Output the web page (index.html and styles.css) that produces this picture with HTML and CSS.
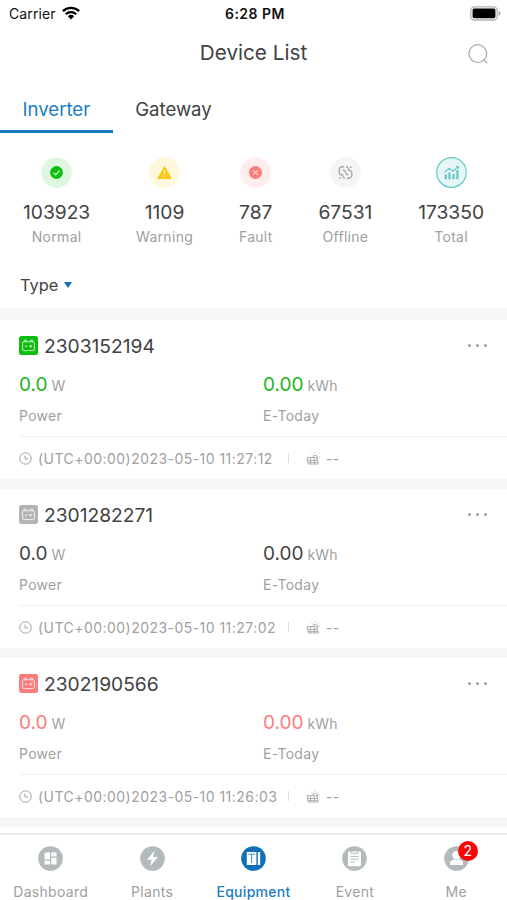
FILE: index.html
```
<!DOCTYPE html>
<html lang="en">

<head>
    <meta charset="UTF-8">
    <meta name="viewport" content="width=device-width, initial-scale=1.0">
    <title>Device List</title>
    <link rel="stylesheet" href="styles.css">
</head>

<body>

    <!-- Shared icons -->
    <svg class="icon-defs" width="0" height="0">
        <symbol id="icon-inverter" viewBox="0 0 19 19">
            <rect width="19" height="19" rx="2.5" fill="currentColor"/>
            <g fill="none" stroke="#fff" stroke-opacity="0.75" stroke-width="1">
                <rect x="3.6" y="5.8" width="11.8" height="8.8" rx="1.4"/>
                <path d="M5.2 5.6V4.2H7.4V5.6M11.4 5.6V4.2H13.6V5.6M5.8 10.2H8.6M10.2 10.2H13.2M11.7 8.8V11.6"/>
            </g>
        </symbol>
        <symbol id="icon-clock" viewBox="0 0 13 13">
            <g fill="none" stroke="currentColor" stroke-width="1">
                <circle cx="6.5" cy="6.5" r="5.7"/>
                <path d="M6 3.6V7H9.2"/>
            </g>
        </symbol>
        <symbol id="icon-solar" viewBox="0 0 14 13">
            <g fill="none" stroke="currentColor" stroke-width="0.8">
                <path d="M1 5.6H10.8L12.4 12H2.2ZM1.4 8.4H11.6M2 10.4H12M4.6 5.6V12M8 5.6L8.6 12"/>
                <path d="M6.4 5.2A2.7 2.7 0 0 1 11.6 5.4V7M9 0.4V1.6M5.5 1.8L6.3 2.7M12.5 1.8L11.7 2.7M12.6 5H13.8"/>
            </g>
        </symbol>
    </svg>

    <!-- Status Bar -->
    <div class="status-bar">
        <div class="carrier">
            <span>Carrier</span>
            <svg width="18" height="14" viewBox="0 0 18 14">
                <g fill="none" stroke="#000" stroke-width="2.3">
                    <path d="M0.9 5.1A11.6 11.6 0 0 1 17.1 5.1"/>
                    <path d="M3.7 8.2A7.6 7.6 0 0 1 14.3 8.2"/>
                </g>
                <path d="M5.9 10.3A4.5 4.5 0 0 1 12.1 10.3L9 13.6Z"/>
            </svg>
        </div>
        <span class="time">6:28 PM</span>
        <svg class="battery" width="31" height="15" viewBox="0 0 31 15">
            <rect x="0.8" y="0.8" width="26.4" height="13.2" rx="3.6" fill="#fff" stroke="#b5b5b5" stroke-width="1.3"/>
            <rect x="2.6" y="2.6" width="22.8" height="9.6" rx="1.8"/>
            <path d="M28.6 5Q30.6 5.6 30.6 7.4T28.6 9.8Z" fill="#aaa"/>
        </svg>
    </div>

    <!-- Header -->
    <div class="header">
        <h1>Device List</h1>
        <svg class="search" width="20" height="20" viewBox="0 0 20 20" fill="none" stroke="#a6a6a6" stroke-width="1.2">
            <circle cx="9.8" cy="9.6" r="8.9"/>
            <path d="M15.4 15.6L19.2 19.2"/>
        </svg>
    </div>

    <!-- Tabs -->
    <div class="tabs">
        <div class="tab active">Inverter</div>
        <div class="tab">Gateway</div>
    </div>

    <!-- Status Counters -->
    <div class="stats">
        <div class="stat">
            <svg width="31" height="31" viewBox="0 0 31 31">
                <circle cx="15.5" cy="15.5" r="15.3" fill="#dff7df"/>
                <circle cx="15.5" cy="15.5" r="6.4" fill="#0ebe0e"/>
                <path d="M12.4 15.6L14.7 17.8L18.7 13.5" fill="none" stroke="#c9f5c9" stroke-width="1.2"/>
            </svg>
            <span class="count">103923</span>
            <span class="name">Normal</span>
        </div>
        <div class="stat">
            <svg width="31" height="31" viewBox="0 0 31 31">
                <circle cx="15.5" cy="15.5" r="15.3" fill="#fff8dc"/>
                <path d="M15.5 9.8L22 21.3H9Z" fill="#fbc912" stroke="#fbc912" stroke-width="1.2" stroke-linejoin="round"/>
                <path d="M15.5 13V17.6M15.5 18.8V20.2" stroke="#fff3c4" stroke-width="1.4"/>
            </svg>
            <span class="count">1109</span>
            <span class="name">Warning</span>
        </div>
        <div class="stat">
            <svg width="31" height="31" viewBox="0 0 31 31">
                <circle cx="15.5" cy="15.5" r="15.3" fill="#ffecec"/>
                <circle cx="15.5" cy="15.5" r="6.5" fill="#fb7c7c"/>
                <path d="M13.1 13.1L17.9 17.9M17.9 13.1L13.1 17.9" stroke="#ffd5d5" stroke-width="1.1"/>
            </svg>
            <span class="count">787</span>
            <span class="name">Fault</span>
        </div>
        <div class="stat">
            <svg width="31" height="31" viewBox="0 0 31 31">
                <circle cx="15.5" cy="15.5" r="15.3" fill="#f5f5f5"/>
                <g fill="none" stroke="#a9a9a9" stroke-width="1.4">
                    <path d="M13.4 18H12.4A3.2 3.2 0 0 1 9.2 14.8V13A3.2 3.2 0 0 1 12.4 9.8H14.2M16.2 9.8A3 3 0 0 1 18.4 11.8"/>
                    <path d="M17.6 13H18.6A3.2 3.2 0 0 1 21.8 16.2V18A3.2 3.2 0 0 1 18.6 21.2H16.8M14.8 21.2A3 3 0 0 1 12.6 19.2"/>
                    <path d="M12.6 13.2H14.2L17 17.8H18.4M20.2 10.8L21.6 9.4M10.8 20.2L9.4 21.6"/>
                </g>
            </svg>
            <span class="count">67531</span>
            <span class="name">Offline</span>
        </div>
        <div class="stat">
            <svg width="31" height="31" viewBox="0 0 31 31">
                <circle cx="15.5" cy="15.5" r="14.8" fill="#e6f6f6" stroke="#62cbc9" stroke-width="1.2"/>
                <path d="M9.8 22.2V17.5M13.5 22.2V15.5M17.5 22.2V17M21.4 22.2V13" stroke="#62c6c6" stroke-width="2.2"/>
                <path d="M8.4 15.4L13.2 11.4L17 14.2L22 9.8M19.8 9.6H22.4V12" fill="none" stroke="#62c6c6" stroke-width="1.1"/>
            </svg>
            <span class="count">173350</span>
            <span class="name">Total</span>
        </div>
    </div>

    <!-- Type Filter -->
    <div class="type-filter">
        <span>Type</span>
        <span class="arrow"></span>
    </div>

    <!-- Devices -->
    <div class="device-list">
        <div class="device normal">
            <div class="device-title">
                <svg class="badge" width="19" height="19"><use href="#icon-inverter"/></svg>
                <span class="serial">2303152194</span>
                <span class="more"><i></i><i></i><i></i></span>
            </div>
            <div class="readings">
                <div class="reading">
                    <div><span class="value">0.0</span><span class="unit">W</span></div>
                    <div class="caption">Power</div>
                </div>
                <div class="reading">
                    <div><span class="value">0.00</span><span class="unit">kWh</span></div>
                    <div class="caption">E-Today</div>
                </div>
            </div>
            <div class="device-footer">
                <svg width="13" height="13"><use href="#icon-clock"/></svg>
                <span class="updated">(UTC+00:00)2023-05-10 11:27:12</span>
                <span class="divider"></span>
                <svg width="14" height="13"><use href="#icon-solar"/></svg>
                <span class="plant">--</span>
            </div>
        </div>

        <div class="device offline">
            <div class="device-title">
                <svg class="badge" width="19" height="19"><use href="#icon-inverter"/></svg>
                <span class="serial">2301282271</span>
                <span class="more"><i></i><i></i><i></i></span>
            </div>
            <div class="readings">
                <div class="reading">
                    <div><span class="value">0.0</span><span class="unit">W</span></div>
                    <div class="caption">Power</div>
                </div>
                <div class="reading">
                    <div><span class="value">0.00</span><span class="unit">kWh</span></div>
                    <div class="caption">E-Today</div>
                </div>
            </div>
            <div class="device-footer">
                <svg width="13" height="13"><use href="#icon-clock"/></svg>
                <span class="updated">(UTC+00:00)2023-05-10 11:27:02</span>
                <span class="divider"></span>
                <svg width="14" height="13"><use href="#icon-solar"/></svg>
                <span class="plant">--</span>
            </div>
        </div>

        <div class="device fault">
            <div class="device-title">
                <svg class="badge" width="19" height="19"><use href="#icon-inverter"/></svg>
                <span class="serial">2302190566</span>
                <span class="more"><i></i><i></i><i></i></span>
            </div>
            <div class="readings">
                <div class="reading">
                    <div><span class="value">0.0</span><span class="unit">W</span></div>
                    <div class="caption">Power</div>
                </div>
                <div class="reading">
                    <div><span class="value">0.00</span><span class="unit">kWh</span></div>
                    <div class="caption">E-Today</div>
                </div>
            </div>
            <div class="device-footer">
                <svg width="13" height="13"><use href="#icon-clock"/></svg>
                <span class="updated">(UTC+00:00)2023-05-10 11:26:03</span>
                <span class="divider"></span>
                <svg width="14" height="13"><use href="#icon-solar"/></svg>
                <span class="plant">--</span>
            </div>
        </div>
    </div>

    <!-- Bottom Navigation -->
    <div class="bottom-nav">
        <div class="nav-item">
            <svg width="25" height="25" viewBox="0 0 25 25">
                <circle cx="12.5" cy="12.5" r="12.3" fill="#b2babb"/>
                <path d="M6.5 6.5H12V13.5H6.5ZM13.3 6.5H18.5V10.5H13.3ZM6.5 14.8H12V18.5H6.5ZM13.3 11.8H18.5V18.5H13.3Z" fill="#fff"/>
            </svg>
            <span>Dashboard</span>
        </div>
        <div class="nav-item">
            <svg width="25" height="25" viewBox="0 0 25 25">
                <circle cx="12.5" cy="12.5" r="12.3" fill="#b2babb"/>
                <path d="M14.6 4.8L7 13.7H11.6L10.3 20.3L18 11.1H13.2Z" fill="#fff"/>
            </svg>
            <span>Plants</span>
        </div>
        <div class="nav-item active">
            <svg width="25" height="25" viewBox="0 0 25 25">
                <circle cx="12.5" cy="12.5" r="12.3" fill="#0f70b7"/>
                <path d="M5.8 6H15.4V19H5.8ZM16.8 6H19.2V19H16.8Z" fill="#fff"/>
                <path d="M7.3 8.2H13.9M10.6 8.2V17" stroke="#0f70b7" stroke-width="0.8"/>
            </svg>
            <span>Equipment</span>
        </div>
        <div class="nav-item">
            <svg width="25" height="25" viewBox="0 0 25 25">
                <circle cx="12.5" cy="12.5" r="12.3" fill="#b2babb"/>
                <rect x="6" y="5.4" width="13" height="14.8" rx="1" fill="#fff"/>
                <path d="M9 4.8V7.3H16V4.8M8.3 10.4H16.5M8.3 13.2H16.5M8.3 16H13" fill="none" stroke="#b2babb" stroke-width="1"/>
            </svg>
            <span>Event</span>
        </div>
        <div class="nav-item">
            <div class="nav-icon">
                <svg width="25" height="25" viewBox="0 0 25 25">
                    <circle cx="12.5" cy="12.5" r="12.3" fill="#b2babb"/>
                    <circle cx="12.5" cy="9.3" r="4.2" fill="#fff"/>
                    <path d="M5.8 19Q5.8 13.8 10 13.5Q12.5 15 15 13.5Q19.2 13.8 19.2 19Z" fill="#fff"/>
                </svg>
                <span class="notification">2</span>
            </div>
            <span>Me</span>
        </div>
    </div>

</body>

</html>
```
FILE: styles.css
```
/* Base Reset */
* {
    box-sizing: border-box;
    margin: 0;
    padding: 0;
}

body {
    width: 507px;
    height: 900px;
    display: flex;
    flex-direction: column;
    overflow: hidden;
    background-color: #fff;
    color: #424242;
    font-family: 'Inter', 'Liberation Sans', sans-serif;
}

svg {
    display: block;
    flex-shrink: 0;
}

.icon-defs {
    display: none;
}

/* Status Bar */
.status-bar {
    display: grid;
    grid-template-columns: 1fr auto 1fr;
    align-items: center;
    height: 27px;
    padding: 0 6px 0 9px;
    color: #111;
    font-size: 14px;
}

.carrier {
    display: flex;
    align-items: center;
    gap: 6px;
    letter-spacing: 0.1px;
}

.carrier svg {
    margin-top: -2px;
}

.time {
    font-weight: 600;
    letter-spacing: 0.5px;
}

.battery {
    justify-self: end;
    margin-top: -1px;
}

/* Header */
.header {
    display: grid;
    grid-template-columns: 1fr auto 1fr;
    align-items: center;
    height: 52px;
    padding: 0 19px;
}

.header h1 {
    grid-column: 2;
    margin-top: -2px;
    font-size: 20.7px;
    font-weight: 400;
}

.search {
    justify-self: end;
    margin-top: 1px;
}

/* Tabs */
.tabs {
    display: flex;
    height: 54px;
}

.tab {
    padding: 18px 22.5px 0;
    font-size: 18.6px;
    line-height: 24px;
}

.tab.active {
    color: #1a7dc4;
    border-bottom: 3px solid #1a7dc4;
}

/* Status Counters */
.stats {
    display: flex;
    justify-content: space-between;
    padding: 24px 23px 0;
    height: 127px;
}

.stat {
    display: flex;
    flex-direction: column;
    align-items: center;
}

.count {
    margin-top: 12px;
    font-size: 19.2px;
    line-height: 24px;
}

.name {
    margin-top: 4px;
    color: #a0a0a0;
    font-size: 14px;
    letter-spacing: 0.3px;
    line-height: 18px;
}

/* Type Filter */
.type-filter {
    display: flex;
    align-items: center;
    gap: 6px;
    height: 48px;
    padding: 2px 20px 0;
    font-size: 16.4px;
}

.arrow {
    border-top: 6px solid #0f70b7;
    border-left: 4px solid transparent;
    border-right: 4px solid transparent;
}

/* Devices */
.device-list {
    height: 519px;
    padding-top: 12px;
    background-color: #f5f6f6;
}

.device {
    height: 159px;
    margin-bottom: 10.2px;
    padding-left: 19px;
    background-color: #fff;
}

.device-title {
    display: flex;
    align-items: center;
    height: 52px;
    padding-right: 20px;
}

.badge {
    margin-top: -1px;
}

.serial {
    flex: 1;
    margin-left: 6px;
    font-size: 19.2px;
}

.more {
    display: flex;
    gap: 5px;
    margin-top: -1px;
}

.more i {
    width: 3px;
    height: 3px;
    border-radius: 50%;
    background-color: #9b9b9b;
}

.readings {
    display: grid;
    grid-template-columns: 1fr 1fr;
    height: 65px;
    border-bottom: 1px solid #f0f0f0;
}

.value {
    font-size: 19px;
    line-height: 26px;
}

.unit {
    margin-left: 4px;
    color: #a0a0a0;
    font-size: 14px;
    letter-spacing: 0.1px;
}

.caption {
    margin-top: 9px;
    color: #a0a0a0;
    font-size: 14px;
    letter-spacing: 0.3px;
    line-height: 18px;
}

.device-footer {
    display: flex;
    align-items: center;
    height: 42px;
    color: #a0a0a0;
    font-size: 14px;
}

.updated {
    width: 240px;
    margin-left: 6px;
    letter-spacing: 0.46px;
    white-space: nowrap;
}

.divider {
    width: 1px;
    height: 10px;
    margin: 0 17px 0 10px;
    background-color: #ddd;
}

.plant {
    margin-left: 6px;
    letter-spacing: 0.4px;
}

/* Device States */
.normal .badge {
    color: #0ebe0e;
}

.normal .value {
    color: #1fb41f;
}

.offline .badge {
    color: #b3b3b3;
}

.fault .badge,
.fault .value {
    color: #fb7c7c;
}

/* Bottom Navigation */
.bottom-nav {
    display: flex;
    flex: 1;
    margin-top: 6px;
    padding-top: 11px;
    border-top: 2px solid #ebebeb;
    background-color: #fff;
}

.nav-item {
    display: flex;
    flex: 1;
    flex-direction: column;
    align-items: center;
    gap: 12px;
    color: #a0a0a0;
    font-size: 14px;
    letter-spacing: 0.3px;
}

.nav-item.active {
    color: #1a7dc4;
    font-weight: 500;
}

.nav-icon {
    position: relative;
}

.notification {
    position: absolute;
    top: -5px;
    left: 14px;
    width: 20px;
    height: 20px;
    border-radius: 50%;
    background-color: #f90606;
    color: #fff;
    font-size: 14px;
    line-height: 20px;
    text-align: center;
}
```
